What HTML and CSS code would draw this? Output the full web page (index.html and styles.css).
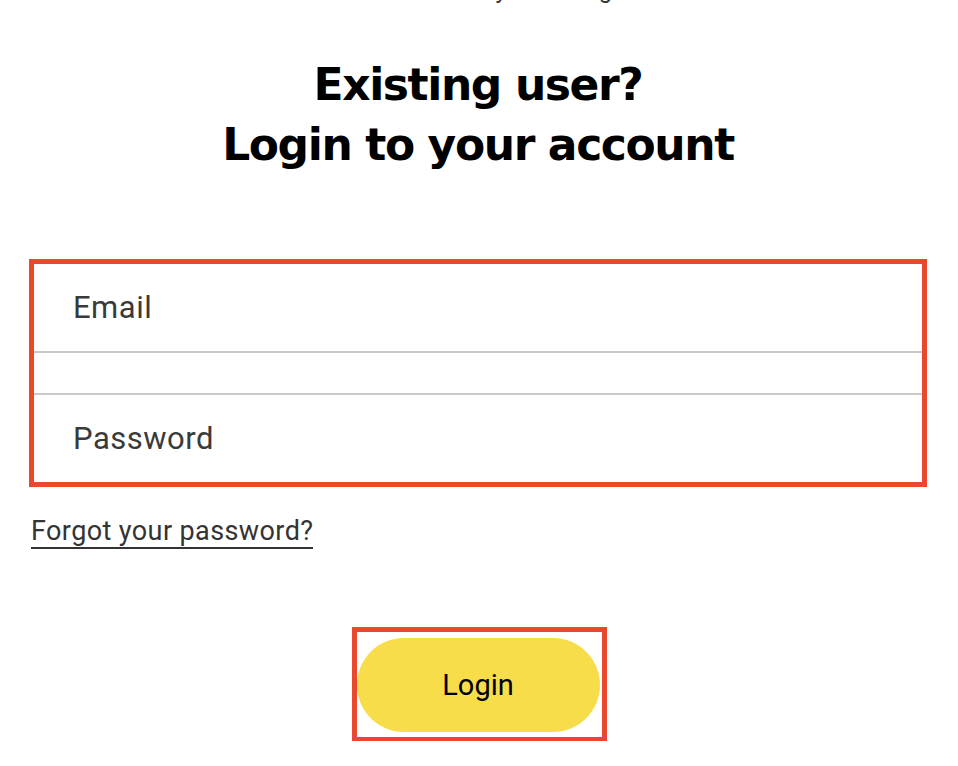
FILE: index.html
```html
<!DOCTYPE html>
<html lang="en">
<head>
<meta charset="utf-8">
<title>Login</title>
<link rel="stylesheet" href="styles.css">
</head>
<body>
<main class="page">
  <p class="intro">Edit and track your listing</p>
  <h1 class="title">Existing user?<br>Login to your account</h1>
  <form class="login-form">
    <div class="fields">
      <label class="field">
        <span class="field-label">Email</span>
      </label>
      <div class="field-gap"></div>
      <label class="field field-pass">
        <span class="field-label">Password</span>
      </label>
    </div>
    <a class="forgot" href="#">Forgot your password?</a>
    <div class="actions">
      <div class="button-frame">
        <button class="login-btn" type="button">Login</button>
      </div>
    </div>
  </form>
</main>
</body>
</html>
```

FILE: styles.css
```css
* { box-sizing: border-box; }
html, body {
  margin: 0;
  padding: 0;
  background: #ffffff;
  overflow: hidden;
}
body {
  font-family: Roboto, "Liberation Sans", Arial, sans-serif;
  color: #333333;
}
.page {
  width: 958px;
  height: 766px;
  padding: 0 31px 0 29px;
}
.intro {
  margin: -25px 0 0;
  font-size: 24px;
  line-height: 30px;
  text-align: center;
  color: #333333;
}
.title {
  margin: 50px 0 0;
  font-family: "DejaVu Sans", "Liberation Sans", Arial, sans-serif;
  font-weight: 700;
  font-size: 44px;
  line-height: 60px;
  letter-spacing: -1.4px;
  text-align: center;
  color: #000000;
}
.login-form {
  margin-top: 84px;
}
.fields {
  border: 5px solid #ea472c;
  display: flex;
  flex-direction: column;
}
.field {
  height: 87px;
  display: flex;
  align-items: center;
  padding-left: 39px;
}
.field-gap {
  height: 44px;
  border-top: 2px solid #c9c9c9;
  border-bottom: 2px solid #c9c9c9;
}
.field-label {
  font-size: 31px;
  letter-spacing: 0.5px;
  color: #3a3a3a;
}
.forgot {
  display: inline-block;
  margin-top: 28px;
  margin-left: 2px;
  font-size: 27px;
  line-height: 32px;
  letter-spacing: 0.4px;
  color: #333333;
  text-decoration: none;
  border-bottom: 2px solid #333333;
}
.actions {
  margin-top: 78px;
  display: flex;
  justify-content: center;
}
.button-frame {
  width: 255px;
  height: 115px;
  border: 5px solid #ea472c;
  padding: 6px 2px 5px 0;
  margin-left: 2px;
}
.login-btn {
  display: block;
  width: 243px;
  height: 94px;
  border: none;
  border-radius: 47px;
  background: #f8dd4b;
  font-family: Roboto, "Liberation Sans", Arial, sans-serif;
  font-size: 29px;
  color: #000000;
  padding: 0;
  cursor: pointer;
}
```
